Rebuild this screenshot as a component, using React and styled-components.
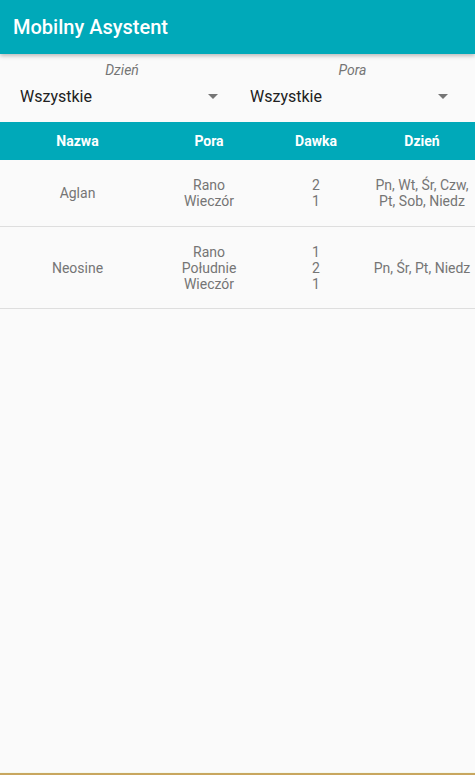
import React from "react";
import styled, { createGlobalStyle } from "styled-components";

const Global = createGlobalStyle`
  html, body { margin: 0; padding: 0; background: #fafafa; }
  body { font-family: Roboto, "Noto Sans", sans-serif; }
`;

const Screen = styled.div`
  width: 475px;
  height: 775px;
  display: flex;
  flex-direction: column;
  background: #fafafa;
  overflow: hidden;
`;

const AppBar = styled.header`
  height: 54px;
  flex: none;
  background: #00a9b9;
  display: flex;
  align-items: center;
  padding-left: 13px;
  box-shadow: 0 2px 4px rgba(0,0,0,0.25);
  position: relative;
  z-index: 1;
`;

const Title = styled.h1`
  margin: 0;
  color: #fff;
  font-size: 20px;
  font-weight: 500;
  padding-bottom: 1px;
`;

const Filters = styled.div`
  height: 68px;
  flex: none;
  display: grid;
  grid-template-columns: 230px 1fr;
`;

const Filter = styled.div`
  display: flex;
  flex-direction: column;
  padding-top: 8px;
`;

const FilterLabel = styled.div`
  text-align: center;
  font-style: italic;
  font-size: 14px;
  color: #757575;
  height: 17px;
  line-height: 17px;
  padding-left: ${p => p.$shift || 0}px;
`;

const Spinner = styled.div`
  display: flex;
  align-items: center;
  justify-content: space-between;
  height: 30px;
  padding: 0 ${p => p.$right}px 0 ${p => p.$left}px;
  margin-top: 2px;
`;

const SpinnerText = styled.span`
  font-size: 16px;
  color: #212121;
`;

const Arrow = styled.span`
  width: 0;
  height: 0;
  border-left: 5px solid transparent;
  border-right: 5px solid transparent;
  border-top: 5px solid #757575;
`;

const Row = styled.div`
  display: grid;
  grid-template-columns: 155px 108px 106px 106px;
  align-items: center;
  ${p => p.$head ? `
    background: #00a9b9;
    height: 38px;
    flex: none;
  ` : `
    min-height: ${p.$h}px;
    border-bottom: 1px solid #dedede;
  `}
`;

const HeadCell = styled.div`
  text-align: center;
  color: #fff;
  font-weight: 700;
  font-size: 14px;
  padding-bottom: 1px;
`;

const Cell = styled.div`
  text-align: center;
  color: #757575;
  font-size: 14px;
  line-height: 16px;
  white-space: pre-line;
`;

const Spacer = styled.div`
  flex: 1;
`;

const BottomLine = styled.div`
  height: 3px;
  flex: none;
  border-top: 1px solid #f4f9ee;
  background: #c8a65f;
  box-sizing: border-box;
`;

const rows = [
  { name: "Aglan", pora: "Rano\nWieczór", dawka: "2\n1", dzien: "Pn, Wt, Śr, Czw,\nPt, Sob, Niedz", h: 66 },
  { name: "Neosine", pora: "Rano\nPołudnie\nWieczór", dawka: "1\n2\n1", dzien: "Pn, Śr, Pt, Niedz", h: 81 },
];

export default function App() {
  return (
    <Screen>
      <Global />
      <AppBar>
        <Title>Mobilny Asystent</Title>
      </AppBar>
      <Filters>
        <Filter>
          <FilterLabel $shift={14}>Dzień</FilterLabel>
          <Spinner $left={20} $right={12}>
            <SpinnerText>Wszystkie</SpinnerText>
            <Arrow />
          </Spinner>
        </Filter>
        <Filter>
          <FilterLabel $shift={0}>Pora</FilterLabel>
          <Spinner $left={20} $right={27}>
            <SpinnerText>Wszystkie</SpinnerText>
            <Arrow />
          </Spinner>
        </Filter>
      </Filters>
      <Row $head>
        <HeadCell>Nazwa</HeadCell>
        <HeadCell>Pora</HeadCell>
        <HeadCell>Dawka</HeadCell>
        <HeadCell>Dzień</HeadCell>
      </Row>
      {rows.map(r => (
        <Row key={r.name} $h={r.h}>
          <Cell>{r.name}</Cell>
          <Cell>{r.pora}</Cell>
          <Cell>{r.dawka}</Cell>
          <Cell>{r.dzien}</Cell>
        </Row>
      ))}
      <Spacer />
      <BottomLine />
    </Screen>
  );
}
